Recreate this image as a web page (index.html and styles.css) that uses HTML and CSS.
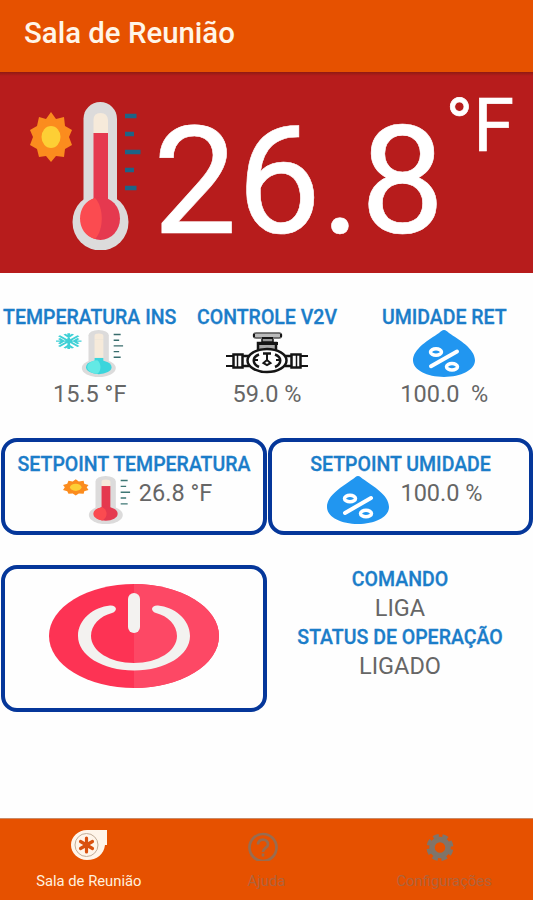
FILE: index.html
```html
<!DOCTYPE html>
<html lang="pt-BR">
<head>
  <meta charset="UTF-8" />
  <meta name="viewport" content="width=device-width, initial-scale=1.0"/>
  <title>Sala de Reunião</title>
  <link rel="stylesheet" href="styles.css">
</head>
<body>

  <!-- shared icons -->
  <svg class="defs" width="0" height="0">
    <defs>
      <g id="sun">
        <path fill="#fb8c1e" d="M21 10 L26 17 L34 15 L35 24 L42 28 L39 35 L42 43 L35 47 L34 55 L26 54 L21 60 L16 54 L9 55 L7 47 L0 43 L3 35 L0 28 L7 24 L9 15 L16 17 Z"/>
        <ellipse cx="21" cy="35" rx="15" ry="17.5" fill="#fb8c1e"/>
        <ellipse cx="21" cy="35" rx="9.5" ry="11" fill="#fdcf35"/>
      </g>
      <g id="tube">
        <rect x="53.5" y="0" width="33.5" height="115" rx="16.7" fill="#dcdbdb"/>
        <ellipse cx="70.5" cy="120" rx="28" ry="28.5" fill="#dcdbdb"/>
        <path fill="#f6eada" d="M63.500 31V18Q63.500 11 70.500 11T78 18V31Z"/>
      </g>
      <g id="drop">
        <path fill="#2196f0" d="M31 0C33 0 34 1.500 36 3C46 10 62 19 62 31C62 41 48 48 31 48S0 41 0 31C0 19 16 10 26 3C28 1.500 29 0 31 0Z"/>
        <path d="M18 37L44 22" stroke="#fff" stroke-width="4" stroke-linecap="round"/>
        <ellipse cx="23" cy="22.500" rx="5.500" ry="3.300" fill="none" stroke="#fff" stroke-width="3.500"/>
        <ellipse cx="39" cy="37.500" rx="5.500" ry="3.300" fill="none" stroke="#fff" stroke-width="3.500"/>
      </g>
      <g id="hot">
        <use href="#sun"/>
        <use href="#tube"/>
        <rect x="63.500" y="31" width="14.500" height="75" fill="#e5394f"/>
        <ellipse cx="70.500" cy="116.500" rx="19.500" ry="21.500" fill="#e5394f"/>
        <path fill="#fb4b50" d="M65 96C45 101 45 132 65 137C74 128 74 105 65 96Z"/>
      </g>
      <path id="ticks" fill="none" stroke-width="4.500" d="M95 14h11.500M95 32h9M95 50h15.500M95 68h9M95 86h11.500"/>
    </defs>
  </svg>

  <header class="topbar">
    <h1>Sala de Reunião</h1>
  </header>

  <section class="hero">
    <svg class="hero-icon" viewBox="0 0 112 148" preserveAspectRatio="none">
      <use href="#hot"/>
      <use href="#ticks" stroke="#1e6486"/>
    </svg>
    <span class="hero-value">26.8</span>
    <span class="hero-unit">°F</span>
  </section>

  <section class="sensors">
    <div class="sensor">
      <h2 class="label">TEMPERATURA INS</h2>
      <svg class="thermo" viewBox="0 0 112 148" preserveAspectRatio="none">
        <path fill="none" stroke="#3fd0d6" stroke-width="4.500" d="M21 10V60M0 35H42M5 18L37 52M5 52L37 18M14 13L21 22L28 13M14 57L21 48L28 57M5 27L12 35L5 43M37 27L30 35L37 43"/>
        <use href="#tube"/>
        <rect x="63.500" y="31" width="14.500" height="75" fill="#f6eada"/>
        <ellipse cx="70.500" cy="117" rx="21" ry="22" fill="#3bd5dc"/>
        <rect x="63.500" y="88" width="14.500" height="25" fill="#3bd5dc"/>
        <path fill="#63e9e5" d="M68 95C46 98 46 135 68 138C75 128 75 105 68 95Z"/>
        <use href="#ticks" stroke="#386c6c"/>
      </svg>
      <p class="value">15.5 °F</p>
    </div>
    <div class="sensor">
      <h2 class="label">CONTROLE V2V</h2>
      <svg class="valve" viewBox="0 0 84 42" fill="none" stroke="#151515" stroke-width="2.500">
        <path d="M1 24H8M1 34H8M76 24H83M76 34H83" stroke-width="1.800"/>
        <rect x="8.500" y="22.500" width="9" height="13"/>
        <path d="M12.500 23V35" stroke-width="1.500"/>
        <rect x="66.500" y="22.500" width="9" height="13"/>
        <path d="M71.500 23V35" stroke-width="1.500"/>
        <path d="M17 24H24M17 34H24M60 24H67M60 34H67"/>
        <path d="M33 18V11H51V18" fill="#aaa"/>
        <path d="M32 11.500H53" stroke-width="3"/>
        <path d="M37 7V10H48V7" fill="#999" stroke-width="1.500"/>
        <rect x="28.500" y="1" width="28" height="5" rx="2.500" fill="#bbb" stroke="#555" stroke-width="1.500"/>
        <path d="M29 2V5M56 2V5M37 6H48" stroke-width="2"/>
        <ellipse cx="42" cy="28.500" rx="19.500" ry="11.500" fill="#fff"/>
        <path d="M34 35C27 32 27 25 34 22.500M50 35C57 32 57 25 50 22.500M38 21.500H46"/>
        <path d="M42 22V28M38.500 31L42 28L45.500 31L42 33Z" stroke-width="2"/>
        <path d="M29 28H33M55 28H51" stroke-width="1.800"/>
      </svg>
      <p class="value">59.0 %</p>
    </div>
    <div class="sensor">
      <h2 class="label">UMIDADE RET</h2>
      <svg class="drop" viewBox="0 0 62 48" preserveAspectRatio="none"><use href="#drop"/></svg>
      <p class="value">100.0&nbsp; %</p>
    </div>
  </section>

  <section class="setpoints">
    <div class="card">
      <h2 class="label">SETPOINT TEMPERATURA</h2>
      <div class="card-row">
        <svg class="thermo" viewBox="0 0 112 148" preserveAspectRatio="none">
          <use href="#hot"/>
          <use href="#ticks" stroke="#3e7774"/>
        </svg>
        <p class="value">26.8 °F</p>
      </div>
    </div>
    <div class="card">
      <h2 class="label">SETPOINT UMIDADE</h2>
      <div class="card-row card-row-wide">
        <svg class="drop" viewBox="0 0 62 48" preserveAspectRatio="none"><use href="#drop"/></svg>
        <p class="value">100.0 %</p>
      </div>
    </div>
  </section>

  <section class="control">
    <button class="card power" aria-label="Liga">
      <svg class="power-icon" viewBox="0 0 170 104">
        <ellipse cx="85" cy="52" rx="85" ry="52" fill="#fd3354"/>
        <path d="M85 0A85 52 0 0 1 85 104Z" fill="#fd4865"/>
        <path fill="#f3f2f0" d="M61 21.500C45 23 29 35 29 52C29 71 53 86.500 85 86.500S141 71 141 52C141 35 125 23 109 21.500C102 21 101 27 107 29C119 32 128 41 128 52C128 67 109 79 85 79S42 67 42 52C42 41 51 32 63 29C69 27 68 21 61 21.500Z"/>
        <rect x="79" y="9" width="12" height="40" rx="6" fill="#f3f2f0"/>
      </svg>
    </button>
    <div class="status">
      <h2 class="label">COMANDO</h2>
      <p class="value">LIGA</p>
      <h2 class="label">STATUS DE OPERAÇÃO</h2>
      <p class="value">LIGADO</p>
    </div>
  </section>

  <nav class="tabs">
    <a class="tab active">
      <svg width="38" height="32" viewBox="0 0 38 32">
        <path fill="#fff5ea" d="M17 1H37V16H35C34 25 27 31 17 31C8 31 1 24 1 16S8 1 17 1Z"/>
        <circle cx="16.500" cy="16" r="11.500" fill="none" stroke="#c2ad98" stroke-width="1"/>
        <path stroke="#d9510f" stroke-width="3.200" stroke-linecap="round" d="M16.500 13V9M16.500 19V23M19 14.500L22.500 12.500M19 17.500L22.500 19.500M14 14.500L10.500 12.500M14 17.500L10.500 19.500"/>
        <circle cx="16.500" cy="16" r="2.500" fill="#d9510f"/>
      </svg>
      <span>Sala de Reunião</span>
    </a>
    <a class="tab">
      <svg width="38" height="32" viewBox="0 0 38 32" fill="none" stroke="#986c50">
        <circle cx="16" cy="18.500" r="13.500" stroke-width="2.700"/>
        <path d="M11 15.500C11 9 21 9 21 15.500C21 18.500 16 19 16 23M16 24.500V27.500" stroke-width="2.700"/>
      </svg>
      <span>Ajuda</span>
    </a>
    <a class="tab">
      <svg width="38" height="32" viewBox="0 0 38 32">
        <g fill="none" stroke="#807469">
          <circle cx="15" cy="18.500" r="8" stroke-width="5.500"/>
          <circle cx="15" cy="18.500" r="11.500" stroke-width="4" stroke-dasharray="5.500 3.532" transform="rotate(10 15 18.500)"/>
        </g>
      </svg>
      <span>Configurações</span>
    </a>
  </nav>

</body>
</html>
```

FILE: styles.css
```css
* {
  box-sizing: border-box;
}
body {
  margin: 0;
  height: 900px;
  display: flex;
  flex-direction: column;
  font-family: Roboto, sans-serif;
  background: #fefefe;
  overflow: hidden;
}
h1, h2, p {
  margin: 0;
}
svg {
  display: block;
  flex: none;
}
.defs {
  position: absolute;
}
.topbar {
  height: 72px;
  padding: 16px 24px 0;
  background: #e65100;
}
.topbar h1 {
  font-size: 29.4px;
  line-height: 34px;
  font-weight: 500;
  color: #fff5e8;
}
.hero {
  height: 201px;
  display: flex;
  align-items: flex-start;
  padding: 30px 0 0 30px;
  background: linear-gradient(#8f1a12, #b71c1c 4px);
  color: #fff;
}
.hero-icon {
  width: 112px;
  height: 148px;
}
.hero-value {
  margin: 5px 0 0 11px;
  font-size: 149.5px;
  line-height: 150px;
  -webkit-text-stroke: 0.6px #fff;
}
.hero-unit {
  margin: -13px 0 0 1px;
  font-size: 74px;
  line-height: 74px;
  -webkit-text-stroke: 0.7px #fff;
}
.sensors {
  display: grid;
  grid-template-columns: repeat(3, 1fr);
  height: 165px;
  padding: 33px 0 0 1px;
}
.sensor {
  display: flex;
  flex-direction: column;
  align-items: center;
}
.label {
  font-size: 19.5px;
  line-height: 24px;
  font-weight: 500;
  color: #1b7dc9;
  white-space: nowrap;
  -webkit-text-stroke: 0.3px #1b7dc9;
}
.value {
  font-size: 23.5px;
  line-height: 34px;
  color: #666;
  white-space: nowrap;
}
.thermo {
  width: 68px;
  height: 48px;
}
.drop {
  width: 62px;
  height: 48px;
}
.sensor .thermo,
.sensor .drop {
  height: 47px;
}
.valve {
  width: 84px;
  height: 42px;
  margin: 2px 0 3px;
}
.setpoints {
  display: grid;
  grid-template-columns: 266px 265px;
  gap: 1px;
  padding-left: 1px;
  height: 97px;
}
.card {
  border: 4px solid #05379a;
  border-radius: 16px;
  background: #fefefe;
}
.setpoints .card {
  padding-top: 10px;
  text-align: center;
}
.card .label {
  padding-top: 1px;
  line-height: 23px;
}
.card-row {
  display: flex;
  justify-content: center;
  gap: 8px;
  margin-left: 7px;
}
.card-row-wide {
  gap: 11px;
  margin-left: 9px;
}
.control {
  display: grid;
  grid-template-columns: 266px 266px;
  margin-top: 30px;
  padding-left: 1px;
  height: 147px;
}
.power {
  display: flex;
  justify-content: center;
  align-items: flex-start;
  padding: 15px 0 0;
}
.power-icon {
  width: 170px;
  height: 104px;
}
.status {
  padding-top: 2px;
  text-align: center;
}
.status .label {
  position: relative;
  top: 1px;
}
.tabs {
  display: grid;
  grid-template-columns: repeat(3, 1fr);
  height: 82px;
  margin-top: auto;
  background: #e65100;
  border-top: 1px solid #c98b68;
}
.tab {
  display: flex;
  flex-direction: column;
  align-items: center;
  padding-top: 10px;
  font-size: 14.8px;
  line-height: 18px;
  color: #b0633c;
}
.tab span {
  margin-top: 11px;
}
.tab.active {
  color: #fff0df;
}
```
